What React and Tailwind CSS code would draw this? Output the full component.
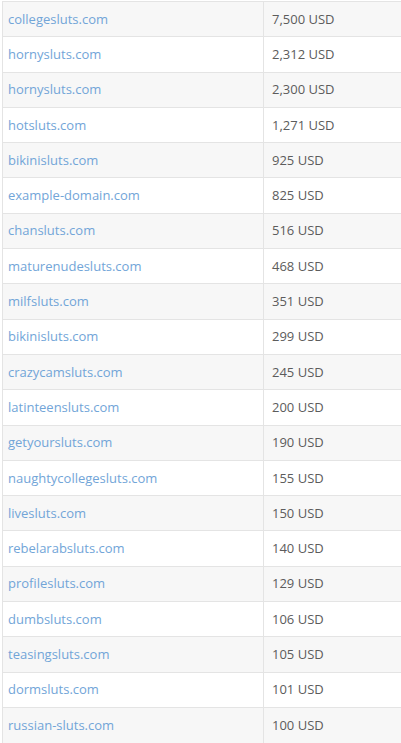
const rows = [
  ['collegesluts.com', '7,500 USD'],
  ['hornysluts.com', '2,312 USD'],
  ['hornysluts.com', '2,300 USD'],
  ['hotsluts.com', '1,271 USD'],
  ['bikinisluts.com', '925 USD'],
  ['example-domain.com', '825 USD'],
  ['chansluts.com', '516 USD'],
  ['maturenudesluts.com', '468 USD'],
  ['milfsluts.com', '351 USD'],
  ['bikinisluts.com', '299 USD'],
  ['crazycamsluts.com', '245 USD'],
  ['latinteensluts.com', '200 USD'],
  ['getyoursluts.com', '190 USD'],
  ['naughtycollegesluts.com', '155 USD'],
  ['livesluts.com', '150 USD'],
  ['rebelarabsluts.com', '140 USD'],
  ['profilesluts.com', '129 USD'],
  ['dumbsluts.com', '106 USD'],
  ['teasingsluts.com', '105 USD'],
  ['dormsluts.com', '101 USD'],
  ['russian-sluts.com', '100 USD'],
];

export default function App() {
  return (
    <div className="w-[401px] h-[743px] overflow-hidden bg-white pt-px pl-[2px] font-['Open_Sans',sans-serif] text-[13px]">
      <table className="w-[420px] border-collapse border-l border-[#e4e4e4]">
        <tbody>
          {rows.map(([domain, price], i) => (
            <tr key={i} className={i % 2 === 0 ? 'bg-[#f7f7f7]' : 'bg-white'}>
              <td className="w-[261px] h-[35.3px] border-t border-r border-[#e4e4e4] pl-[5px] py-0 leading-none">
                <a className="text-[#72a5d8] no-underline">{domain}</a>
              </td>
              <td className="h-[35.3px] border-t border-[#e4e4e4] pl-[8px] py-0 text-[#5c5c5c] leading-none">
                {price}
              </td>
            </tr>
          ))}
        </tbody>
      </table>
    </div>
  );
}
